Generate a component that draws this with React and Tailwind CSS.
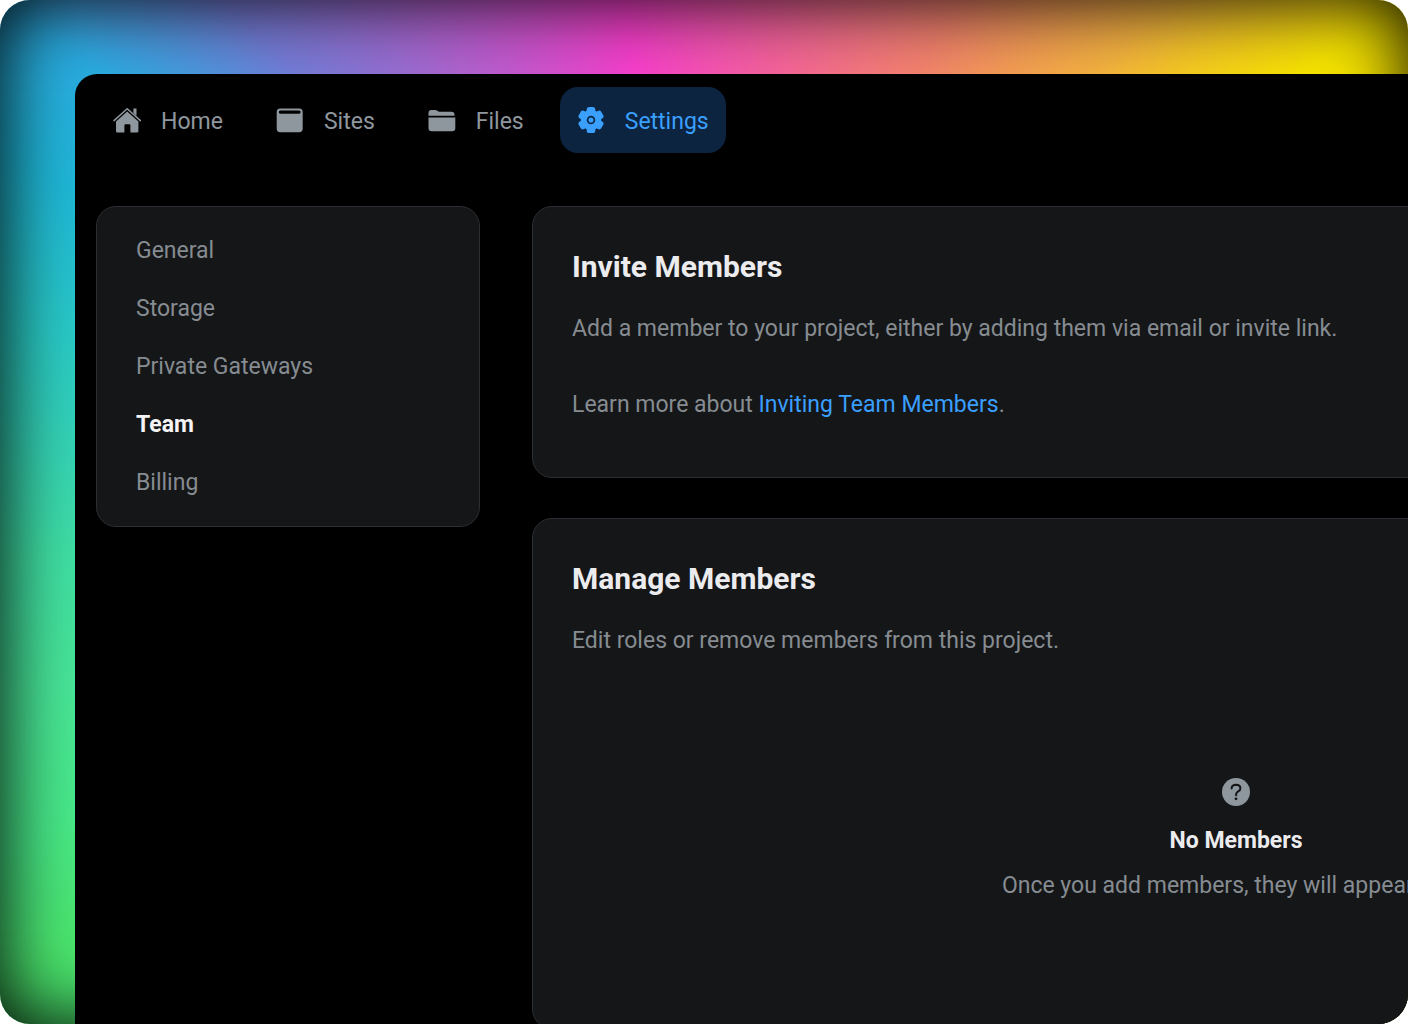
function HomeIcon() {
  return (
    <svg viewBox="0 0 28 28" className="size-7 shrink-0" fill="currentColor" aria-hidden="true">
      <path d="M20.4 2.6h3.1v7.2l-3.1-2.9z" />
      <path d="M1 14.6 14.2 2.8 27.4 14.6" fill="none" stroke="currentColor" strokeWidth="1.5" strokeLinejoin="round" strokeLinecap="round" />
      <path d="M14.2 5.6 25.4 15.6V25.2q0 1.4-1.4 1.4h-6.6v-7.4q0-1-1-1h-4q-1 0-1 1v7.4H4.4Q3 26.6 3 25.2V15.6z" />
    </svg>
  );
}

function SitesIcon() {
  return (
    <svg viewBox="0 0 28 28" className="size-7 shrink-0" fill="currentColor" aria-hidden="true">
      <path fillRule="evenodd" d="M4.2 2.5h19.2q3.3 0 3.3 3.5v16.5q0 3.8-3.6 3.8H4.3Q.7 26.3.7 22.5V6q0-3.5 3.5-3.5zM4.2 4.6q-1.4 0-1.4 1.5 0 1.6 1.4 1.6h19q1.4 0 1.4-1.6 0-1.5-1.4-1.5z" />
    </svg>
  );
}

function FilesIcon() {
  return (
    <svg viewBox="0 0 28 28" className="size-7 shrink-0" fill="currentColor" aria-hidden="true">
      <path d="M.5 9.8V7q0-3 3-3h3.8q1.2 0 2 .7l.7.6q.5.4 1.3.4h12.2q3 0 3 2.9v1.2z" />
      <path d="M.5 11.4h26.8V22q0 3.2-3.2 3.2H3.7Q.5 25.2.5 22z" />
    </svg>
  );
}

function SettingsIcon() {
  return (
    <svg viewBox="0 0 28 28" className="size-7 shrink-0" fill="currentColor" aria-hidden="true">
      <circle cx="14" cy="14" r="10.3" />
      {[0, 60, 120].map((a) => (
        <rect key={a} x="9.7" y="1" width="8.6" height="26" rx="2.6" transform={`rotate(${a} 14 14)`} />
      ))}
      <circle cx="14" cy="14" r="3.4" fill="none" stroke="#0c2440" strokeWidth="1.7" />
    </svg>
  );
}

function QuestionIcon() {
  return (
    <svg viewBox="0 0 28 28" className="size-7 text-[#8f979e]" fill="currentColor" aria-hidden="true">
      <circle cx="14" cy="14" r="14" />
      <path d="M9.6 10.4Q9.8 6.7 14 6.7q4.4.1 4.4 3.5 0 2-2.2 3.2-2.1 1.2-2.1 3.2v.6" fill="none" stroke="#151618" strokeWidth="2" strokeLinecap="round" />
      <circle cx="14" cy="20.8" r="1.4" fill="#151618" />
    </svg>
  );
}

const tabs = [
  { label: "Home", Icon: HomeIcon },
  { label: "Sites", Icon: SitesIcon },
  { label: "Files", Icon: FilesIcon },
  { label: "Settings", Icon: SettingsIcon, active: true },
];

const sections = ["General", "Storage", "Private Gateways", "Team", "Billing"];

function Card({ title, children }) {
  return (
    <section className="rounded-[20px] border border-[#2b2f33] bg-[#151618] px-[39px] pt-[38px] pb-[53px]">
      <h2 className="text-[30px] leading-[44px] font-bold text-[#ececee]">{title}</h2>
      {children}
    </section>
  );
}

export default function App() {
  return (
    <div className="flex h-screen overflow-hidden rounded-[30px] bg-[conic-gradient(#f652b4_0deg,#f4826e_26deg,#f4b23f_42deg,#f7e400_54deg,#f7e400_100deg,#4be66a_200deg,#4be66e_236deg,#48e988_244deg,#48e698_255deg,#40e0a4_266deg,#32d2ba_278deg,#2acbc6_285deg,#1fb8d8_297deg,#2aabe0_306deg,#747cd6_317deg,#ab65d0_330deg,#f73fcc_351deg,#f652b4_360deg)] pt-[74px] pl-[75px] font-[Roboto,sans-serif] text-[23px] leading-[38px] text-[#868c91] shadow-[inset_2px_0_74px_#000]">
      <div className="min-w-0 flex-1 overflow-hidden rounded-tl-[22px] bg-black pt-[13px] pl-[21px]">
        <nav className="flex gap-[19px]" aria-label="Main">
          {tabs.map(({ label, Icon, active }) => (
            <a
              key={label}
              href="#"
              aria-current={active ? "page" : undefined}
              className={
                active
                  ? "flex h-[66px] items-center gap-5 rounded-[18px] bg-[#0c2440] px-[17px] text-[#3a9ffd]"
                  : "flex h-[66px] items-center gap-5 rounded-[18px] px-[17px] text-[#8f979e]"
              }
            >
              <Icon />
              <span className="pt-1">{label}</span>
            </a>
          ))}
        </nav>

        <div className="mt-[53px] flex items-start gap-[52px]">
          <aside className="w-96 shrink-0 rounded-[20px] border border-[#2b2f33] bg-[#151618] px-[39px] pt-[15px] pb-[14px]">
            <ul>
              {sections.map((s) => (
                <li key={s}>
                  <a
                    href="#"
                    className={
                      s === "Team"
                        ? "flex h-[58px] items-center font-bold text-[#f4f4f5]"
                        : "flex h-[58px] items-center"
                    }
                  >
                    {s}
                  </a>
                </li>
              ))}
            </ul>
          </aside>

          <main className="flex min-w-[1408px] flex-col gap-10">
            <Card title="Invite Members">
              <p className="mt-[21px]">
                Add a member to your project, either by adding them via email or invite link.
                <br />
                <br />
                Learn more about <a href="#" className="text-[#3a9ffd]">Inviting Team Members</a>.
              </p>
            </Card>
            <Card title="Manage Members">
              <p className="mt-[21px]">Edit roles or remove members from this project.</p>
              <div className="flex flex-col items-center pt-[118px] pb-[70px]">
                <QuestionIcon />
                <h3 className="mt-4 font-bold text-[#ececee]">No Members</h3>
                <p className="mt-[7px]">Once you add members, they will appear here.</p>
              </div>
            </Card>
          </main>
        </div>
      </div>
    </div>
  );
}
